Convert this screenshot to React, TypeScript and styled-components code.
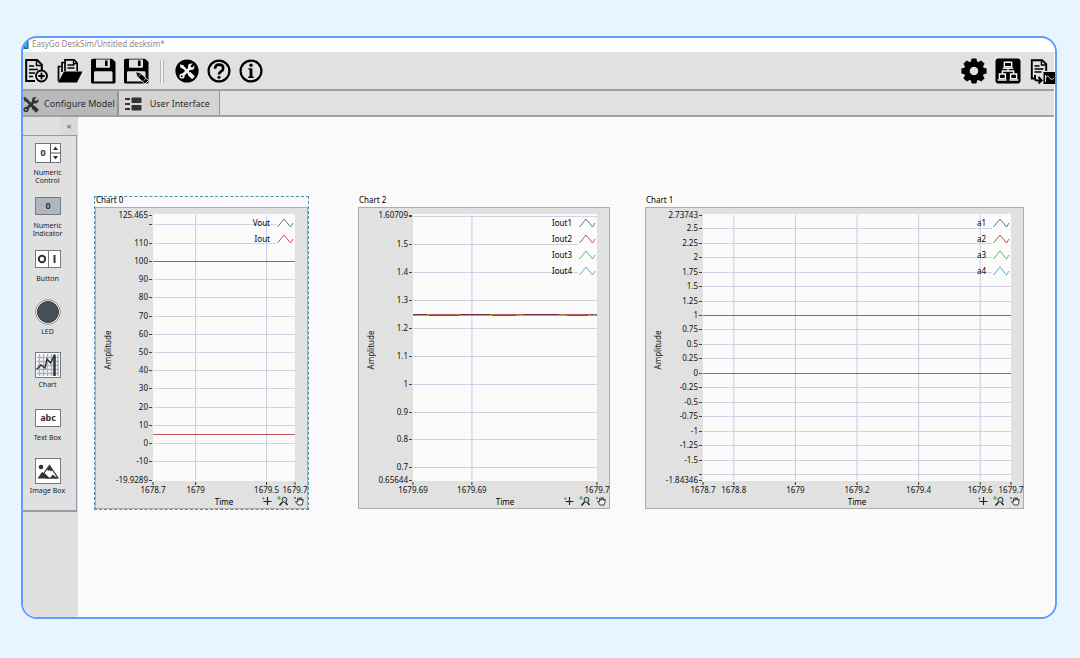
import React from "react";
import styled, { createGlobalStyle } from "styled-components";

const GlobalStyle = createGlobalStyle`
  *, *::before, *::after { box-sizing: border-box; }
  body {
    margin: 0;
    background: #e8f5ff;
    font-family: "Noto Sans", "Open Sans", sans-serif;
    color: #222;
  }
  button {
    font: inherit;
    color: inherit;
    border: 0;
    padding: 0;
    margin: 0;
    background: none;
    cursor: pointer;
  }
  svg { display: block; }
`;

const Page = styled.div`
  min-height: 100vh;
  padding: 36px 23px 39px 21px;
  display: flex;
`;

const AppWindow = styled.div`
  flex: 1;
  min-width: 0;
  display: flex;
  flex-direction: column;
  padding-right: 1px;
  overflow: hidden;
  background: #fff;
  border: 2px solid #5f9dff;
  border-radius: 16px;
`;

const TitleBar = styled.header`
  display: flex;
  align-items: center;
  gap: 3px;
  height: 14px;
  padding-bottom: 2px;
  font-size: 8px;
  line-height: 12px;
  color: #8a8a8a;
`;

const Toolbar = styled.div`
  display: flex;
  align-items: center;
  height: 39px;
  padding: 1px 0 0 1px;
  background: #e1e1e1;
  border-bottom: 2px solid #a0a0a0;
`;

const ToolGroup = styled.div<{ $gap: number; $end?: boolean }>`
  display: flex;
  gap: ${(p) => p.$gap}px;
  margin-left: ${(p) => (p.$end ? "auto" : "0")};
  margin-right: ${(p) => (p.$end ? "-1px" : "0")};
`;

const ToolButton = styled.button`
  width: 26px;
  height: 26px;
  color: #000;
`;

const Separator = styled.div`
  width: 4px;
  height: 23px;
  margin: 0 10px 0 11px;
  border: solid #b4b4b4;
  border-width: 0 1px;
  background: #f2f2f2;
`;

const TabBar = styled.div`
  display: flex;
  height: 26px;
  background: #e1e1e1;
  border-bottom: 2px solid #a0a0a0;
`;

const Tab = styled.button<{ $active?: boolean }>`
  display: flex;
  align-items: center;
  gap: ${(p) => (p.$active ? 4 : 8)}px;
  padding: 2px ${(p) => (p.$active ? 2 : 9)}px 0 ${(p) => (p.$active ? 0 : 5)}px;
  font-size: 9px;
  line-height: 12px;
  color: #2c2c2c;
  white-space: nowrap;
  background: ${(p) => (p.$active ? "#b9b9b9" : "#d4d4d4")};
  border-right: ${(p) => (p.$active ? 2 : 1)}px solid #969696;
`;

const Body = styled.div`
  flex: 1;
  display: flex;
  background: #fafafa;
`;

const Sidebar = styled.aside`
  flex: none;
  width: 55px;
  background: #e0e0e0;
`;

const Collapse = styled.div`
  display: flex;
  justify-content: flex-end;
  height: 18px;
`;

const CollapseButton = styled.button`
  width: 18px;
  font-size: 9px;
  line-height: 16px;
  color: #555;
  background: #dadada;
`;

const Palette = styled.div`
  width: 54px;
  padding: 3px 4px 0 0;
  border: solid #9a9aa6;
  border-width: 1px 1px 2px 0;
`;

const PaletteItem = styled.button`
  display: flex;
  flex-direction: column;
  align-items: center;
  gap: 2px;
  width: 100%;
  height: 53px;
  font-size: 7px;
  line-height: 8px;
  color: #222;
  text-align: center;
`;

const PaletteIcon = styled.span`
  display: flex;
  align-items: center;
  height: 28px;
`;

const PaletteLabel = styled.span`
  width: 44px;
`;

const Canvas = styled.main`
  flex: 1;
  min-width: 0;
  display: grid;
  grid-template-columns: 215fr 48fr 254fr 33fr 381fr;
  align-content: start;
  padding: 79px 29px 40px 16px;
`;

const Frame = styled.section<{ $column: number; $selected?: boolean }>`
  grid-column: ${(p) => p.$column};
  min-width: 0;
  border: 1px dashed ${(p) => (p.$selected ? "#4a90a6" : "transparent")};
`;

const ChartTitle = styled.h2`
  margin: 0;
  padding-left: 1px;
  height: 10px;
  font-size: 8px;
  line-height: 6px;
  font-weight: 400;
  color: #000;
`;

const Panel = styled.div<{ $axis: number }>`
  display: grid;
  grid-template-columns: ${(p) => p.$axis}px minmax(0, 1fr) 12px;
  grid-template-rows: 267px 14px 13px;
  padding-top: 6px;
  background: #e1e1e1;
  border: 1px solid #acacac;
`;

const YAxis = styled.svg`
  overflow: visible;
`;

const AxisText = styled.text`
  font-size: 8px;
  fill: #111;
`;

const PlotArea = styled.div`
  position: relative;
  background: #fbfbfb;
`;

const XAxis = styled.svg`
  grid-column: 2;
  overflow: visible;
`;

const Legend = styled.ul`
  position: absolute;
  top: 1px;
  right: 0;
  margin: 0;
  padding: 0;
  list-style: none;
  font-size: 8px;
  color: #000;
`;

const LegendItem = styled.li`
  display: flex;
  align-items: center;
  justify-content: flex-end;
  gap: 6px;
  height: 16px;
  line-height: 16px;
`;

const LegendSwatch = styled.svg`
  background: #fbfbfb;
`;

const TimeLabel = styled.div`
  grid-column: 2;
  grid-row: 3;
  justify-self: center;
  font-size: 8px;
  line-height: 14px;
  color: #000;
`;

const ChartTools = styled.div`
  grid-column: 2 / -1;
  grid-row: 3;
  justify-self: end;
  display: flex;
  gap: 4px;
  padding: 1px 2px 0 0;
`;

const ChartTool = styled.button`
  width: 12px;
  height: 10px;
`;

/* ---------- toolbar icons ---------- */

const Icon = ({ children }: { children: React.ReactNode }) => (
  <svg width="26" height="26" viewBox="0 0 26 26" fill="none" stroke="currentColor" strokeWidth="2" aria-hidden="true">
    {children}
  </svg>
);

const NewFileIcon = () => (
  <Icon>
    <path d="M11 23H2.2V2h11l4.600 4.600V12" />
    <path d="M12.500 2v5.500h5.500" strokeWidth="1.500" />
    <path d="M5 8h5M5 11.500h9M5 15h6M5 18.500h4" strokeWidth="1.600" />
    <circle cx="17.500" cy="18" r="5.500" strokeWidth="1.800" />
    <path d="M17.500 14.800v6.400M14.300 18h6.400" strokeWidth="1.800" />
  </Icon>
);

const OpenIcon = () => (
  <Icon>
    <path d="M1.500 23V8.500H4M5 14V4.500h2.500M8 13V1.800h9l3.200 3.200v8" strokeWidth="1.700" />
    <path d="M16.500 2v3.500H20M10.500 7h7M10.500 10h7" strokeWidth="1.400" />
    <path d="M7 13.500h18.500L20 24.500H1z" fill="currentColor" stroke="none" />
  </Icon>
);

const Disk = () => (
  <>
    <path d="M3 .800h19L25.500 4v20q0 1.500-1.500 1.500H2.500Q1 25.500 1 24V2.500Q1 .800 3 .800z" fill="currentColor" stroke="none" />
    <path d="M6 1.500h14V9q0 .800-.800.800H6.800Q6 9.800 6 9z" fill="#e1e1e1" stroke="none" />
    <path d="M16.300 2.500v5.500" strokeWidth="2.600" />
    <path d="M4 14.500q0-1.200 1.200-1.200h16q1.300 0 1.300 1.200v9H4z" fill="#e1e1e1" stroke="none" />
  </>
);

const SaveIcon = () => (
  <Icon>
    <Disk />
  </Icon>
);

const SaveAsIcon = () => (
  <Icon>
    <Disk />
    <path d="M12.500 13.500l5 1.500 8 7.500-3.500 3.500-8-7.500z" fill="currentColor" stroke="#e1e1e1" strokeWidth="1" />
    <path d="M15.500 18.500l2.500-2.800M20.500 22.800l2.500-2.600" stroke="#e1e1e1" strokeWidth=".800" />
  </Icon>
);

const CrossedTools = ({ color, hole }: { color: string; hole: string }) => (
  <>
    <path d="M8.200 8.200l9 9.400" stroke={color} strokeWidth="2.400" />
    <path d="M16 10L8 18" stroke={color} strokeWidth="3" />
    <circle cx="17.200" cy="8.800" r="3.200" fill={color} stroke="none" />
    <circle cx="8" cy="18" r="2.600" fill={color} stroke="none" />
    <path d="M17.200 8.800L21 5" stroke={hole} strokeWidth="2.400" />
    <circle cx="7.800" cy="18.200" r=".900" fill={hole} stroke="none" />
    <path d="M5.800 6.200l3.500 1 1 2.500-1.300 1-2.500-1z" fill={color} stroke="none" />
    <path d="M15 15.500l4.500 4.300" stroke={color} strokeWidth="4" />
  </>
);

const ToolsIcon = () => (
  <Icon>
    <circle cx="13" cy="13" r="11.600" fill="currentColor" stroke="none" />
    <CrossedTools color="#f1f1f1" hole="#000" />
  </Icon>
);

const HelpIcon = () => (
  <Icon>
    <circle cx="13" cy="13" r="10.400" strokeWidth="2.200" />
    <path d="M9 10.800q0-4.200 4.100-4.200t4.100 3.600q0 1.900-2.100 3.200T13 16.600" strokeWidth="2.600" />
    <circle cx="13" cy="19.300" r="1.600" fill="currentColor" stroke="none" />
  </Icon>
);

const InfoIcon = () => (
  <Icon>
    <circle cx="13" cy="13" r="10.400" strokeWidth="2.200" />
    <circle cx="13" cy="7.200" r="1.700" fill="currentColor" stroke="none" />
    <path d="M13 10.500v8.500" strokeWidth="2.800" />
    <path d="M10.500 11h2.500M10.300 19.300h5.400" strokeWidth="1.600" />
  </Icon>
);

const GearIcon = () => (
  <Icon>
    <circle cx="13" cy="13" r="7.200" strokeWidth="5.800" />
    {[0, 45, 90, 135, 180, 225, 270, 315].map((a) => (
      <path key={a} d="M9.600 4.500L10.600.400h4.800l1 4.100z" fill="currentColor" stroke="none" transform={`rotate(${a} 13 13)`} />
    ))}
  </Icon>
);

const NetworkIcon = () => (
  <Icon>
    <rect x=".500" y=".500" width="25" height="25" rx="3" fill="currentColor" stroke="none" />
    <g stroke="#f4f4f4" strokeWidth="1.400">
      <path d="M9.300 4.200h7.400v4.600H9.300zM4.400 16h6v4.600h-6zM15.600 16h6v4.600h-6z" />
      <path d="M7.800 10.200h10.400M13 10.200v2.800M7.400 16v-3h11.200v3M2.600 22h9M14.400 22h9" />
    </g>
  </Icon>
);

const ExportIcon = () => (
  <Icon>
    <path d="M5 20.500H2.800V2.200h10.400l4 4V13" strokeWidth="1.900" />
    <path d="M12.500 2v5h5M5.500 8h5M5.500 11h9M5.500 14h7" strokeWidth="1.500" />
    <path d="M6 17v3.500q0 2 2 2h4M9.500 19l3.200 3.500L9.500 25.500" strokeWidth="1.900" />
    <rect x="14.500" y="14" width="13" height="12" fill="currentColor" stroke="none" />
    <path d="M16.500 24v-7M16.500 20.500q1.700-4.500 3.800-1t4.700.5" stroke="#ddd" strokeWidth="1" />
  </Icon>
);

const TabToolsIcon = () => (
  <svg width="17" height="17" viewBox="5 4.500 17 17" fill="none" stroke="#333" aria-hidden="true">
    <path d="M6 6l12.500 13" stroke="#333" strokeWidth="2" />
    <CrossedTools color="#333" hole="#b9b9b9" />
  </svg>
);

const TabLayoutIcon = () => (
  <svg width="18" height="14" viewBox="0 0 18 14" fill="#333" aria-hidden="true">
    <path d="M1 1h5v2H1zM1 6h5v2H1zM1 11h5v2H1z" />
    <rect x="7.500" y=".500" width="10" height="5.500" rx="1" />
    <rect x="7.500" y="8" width="10" height="5.500" rx="1" />
  </svg>
);

const LogoMark = () => (
  <svg width="6" height="12" viewBox="0 0 6 12" aria-hidden="true">
    <path d="M0 1h5.500v10H0z" fill="#1c6fa8" />
    <path d="M0 8l4-6v8z" fill="#3fb0df" />
  </svg>
);

/* ---------- palette icons ---------- */

const GlyphText = styled.text<{ $size: number }>`
  font-size: ${(p) => p.$size}px;
  font-weight: 700;
  fill: #333;
  text-anchor: middle;
`;

const box = { fill: "#fff", stroke: "#77777f", strokeWidth: 1 };

const NumericControlIcon = () => (
  <svg width="26" height="20" viewBox="0 0 26 20">
    <rect x=".5" y=".5" width="25" height="19" {...box} />
    <path d="M15.500 0v20M15.500 10H26" stroke="#555" />
    <path d="M18 7l2.500-3.500L23 7zM18 13l2.500 3.500L23 13z" fill="#333" />
    <GlyphText $size={9} x="8" y="13">0</GlyphText>
  </svg>
);

const NumericIndicatorIcon = () => (
  <svg width="26" height="18" viewBox="0 0 26 18">
    <rect x=".5" y=".5" width="25" height="17" fill="#aeb6c0" stroke="#77777f" />
    <GlyphText $size={9} x="13" y="12">0</GlyphText>
  </svg>
);

const ButtonIcon = () => (
  <svg width="26" height="18" viewBox="0 0 26 18">
    <rect x=".5" y=".5" width="25" height="17" {...box} />
    <path d="M13.500 0v18" stroke="#77777f" />
    <circle cx="7" cy="9" r="3.200" fill="none" stroke="#333" strokeWidth="2" />
    <path d="M19.500 5v8" stroke="#333" strokeWidth="2" />
  </svg>
);

const LedIcon = () => (
  <svg width="26" height="26" viewBox="0 0 26 26">
    <circle cx="13" cy="13" r="12.300" fill="#f6f6f6" stroke="#8a8a90" />
    <circle cx="13" cy="13" r="10.500" fill="#4a5057" stroke="#33383d" />
  </svg>
);

const ChartIcon = () => (
  <svg width="26" height="26" viewBox="0 0 26 26">
    <rect x=".5" y=".5" width="25" height="25" {...box} />
    <path d="M2 5.500h22M2 9.500h22M2 13.500h22M2 17.500h22M2 21.500h22M4.500 2v22M8.500 2v22M12.500 2v22M16.500 2v22M23 2v22" stroke="#a9b3c0" strokeWidth="1.500" />
    <path d="M1.500 17.500L6 13l4 3 2-9 3.500 4L19 4" fill="none" stroke="#333" strokeWidth="1.500" />
    <path d="M19.500 2.500V24" stroke="#333" strokeWidth="2.500" />
  </svg>
);

const TextBoxIcon = () => (
  <svg width="26" height="18" viewBox="0 0 26 18">
    <rect x=".5" y=".5" width="25" height="17" {...box} />
    <GlyphText $size={9} x="13" y="12">abc</GlyphText>
  </svg>
);

const ImageBoxIcon = () => (
  <svg width="26" height="26" viewBox="0 0 26 26">
    <rect x=".5" y=".5" width="25" height="25" {...box} />
    <circle cx="6" cy="9" r="2.300" fill="#333" />
    <path d="M9 15l5.500-7.500L23 20H10" fill="none" stroke="#333" strokeWidth="1.200" />
    <path d="M2.500 20.500L7 14l3 1.500 5 5zM12 11l2.500-3.500 3 4.300-1.500 1.700-1.500-1.500-1.500 1z" fill="#333" />
    <path d="M15 20.500l2.500-4 2 1.500 3.500 2.500z" fill="#333" />
  </svg>
);

/* ---------- charts ---------- */

interface Tick {
  at: number;
  label?: string;
}

interface Series {
  name: string;
  color: string;
  value?: number;
}

interface ChartProps {
  title: string;
  column: number;
  axis: number;
  selected?: boolean;
  min: number;
  max: number;
  yTicks: Tick[];
  xTicks: Tick[];
  series: Series[];
  children?: React.ReactNode;
}

const SPAN = 265;

const Chart = ({ title, column, axis, selected, min, max, yTicks, xTicks, series, children }: ChartProps) => {
  const toY = (v: number) => Math.floor(1 + ((max - v) / (max - min)) * SPAN) + 0.5;
  const inner = xTicks.filter((t) => t.at > 0 && t.at < 100);
  const ends: Tick[] = [
    { at: max, label: String(max) },
    { at: min, label: String(min) },
  ];
  return (
    <Frame $column={column} $selected={selected} aria-label={title}>
      <ChartTitle>{title}</ChartTitle>
      <Panel $axis={axis}>
        <YAxis width={axis} height="267">
          {[...ends, ...yTicks].map((t) => (
            <React.Fragment key={t.at}>
              <line x1={axis - 4} x2={axis - 1} y1={toY(t.at)} y2={toY(t.at)} stroke="#444" />
              {t.label && (
                <AxisText x={axis - 5} y={Math.floor(toY(t.at)) + 3} textAnchor="end">
                  {t.label}
                </AxisText>
              )}
            </React.Fragment>
          ))}
          <AxisText transform="translate(15 136) rotate(-90)" textAnchor="middle">
            Amplitude
          </AxisText>
        </YAxis>
        <PlotArea>
          <svg width="100%" height="267">
            {yTicks.map((t) => (
              <line key={t.at} x1="0" x2="100%" y1={toY(t.at)} y2={toY(t.at)} stroke="#d2d2e4" />
            ))}
            {inner.map((t) => (
              <line key={t.at} x1={`${t.at}%`} x2={`${t.at}%`} y1="1" y2="266" stroke="#cacae0" />
            ))}
            {series
              .filter((s) => s.value !== undefined)
              .map((s) => (
                <line key={s.name} x1="0" x2="100%" y1={toY(s.value!)} y2={toY(s.value!)} stroke={s.color} />
              ))}
            {children}
          </svg>
          <Legend>
            {series.map((s) => (
              <LegendItem key={s.name}>
                {s.name}
                <LegendSwatch width="19" height="12" viewBox="0 0 19 12">
                  <path d="M1.500 10L8 2l6.500 8L17 6" fill="none" stroke={s.color} />
                </LegendSwatch>
              </LegendItem>
            ))}
          </Legend>
        </PlotArea>
        <XAxis width="100%" height="14">
          {xTicks.map((t) => (
            <React.Fragment key={t.at}>
              <line x1={`${t.at}%`} x2={`${t.at}%`} y1="1" y2="4" stroke="#333" />
              <AxisText x={`${t.at}%`} y="12" textAnchor="middle">
                {t.label}
              </AxisText>
            </React.Fragment>
          ))}
        </XAxis>
        <TimeLabel>Time</TimeLabel>
        <ChartTools>
          <ChartTool aria-label="Cursor">
            <svg width="12" height="10" viewBox="0 0 12 10">
              <path d="M6.500 1v8M2.500 5.500h8" stroke="#222" strokeWidth="1.200" />
              <circle cx="2.500" cy="2.500" r="1" fill="#4b6b4b" />
            </svg>
          </ChartTool>
          <ChartTool aria-label="Zoom">
            <svg width="12" height="10" viewBox="0 0 12 10">
              <circle cx="2" cy="2" r="1.700" fill="#5fb84a" />
              <circle cx="7.500" cy="3.800" r="2.500" fill="#c9c9e4" stroke="#333" />
              <path d="M5.500 6L2.500 9.500M8.500 6.500l2 2.500" stroke="#222" strokeWidth="1.500" />
            </svg>
          </ChartTool>
          <ChartTool aria-label="Pan">
            <svg width="12" height="10" viewBox="0 0 12 10">
              <circle cx="2" cy="2" r="1" fill="#4b6b4b" />
              <path d="M5 9L2.500 5.500 4.500 6V2.500l1.500 2V1.500l1.500 2.500.5-2.500 1 3 1-1.500V6L9 9z" fill="#f2f2f2" stroke="#333" strokeWidth=".9" />
            </svg>
          </ChartTool>
        </ChartTools>
      </Panel>
    </Frame>
  );
};

const steps = (values: number[], hidden: number[] = []): Tick[] =>
  values.map((v) => ({ at: v, label: hidden.includes(v) ? undefined : String(v) }));

const BLUE = "#4a8292";
const RED = "#c25555";
const GREEN = "#62bd62";
const CYAN = "#5fb5c0";

const Ripple = () => (
  <svg width="100%" height="267" viewBox="0 0 184 267" preserveAspectRatio="none" fill="none">
    <path d="M0 101.500H184" stroke="#8fa3b4" />
    <path d="M0 100.500H184" stroke="#7a3038" />
    <path d="M15 100.500H46M80 100.500H108M148 100.500H178" stroke="#b65c5c" />
    <path d="M16 101.500H46M79 101.500H103M154 101.500H175" stroke="#4f5f70" />
    <path d="M14 100.500h5M43 100.500h4M77 100.500h5M107 100.500h3M146 100.500h4M180 100.500h3" stroke="#8a8a20" />
  </svg>
);

const palette: { label: string; icon: React.ReactNode }[] = [
  { label: "Numeric Control", icon: <NumericControlIcon /> },
  { label: "Numeric Indicator", icon: <NumericIndicatorIcon /> },
  { label: "Button", icon: <ButtonIcon /> },
  { label: "LED", icon: <LedIcon /> },
  { label: "Chart", icon: <ChartIcon /> },
  { label: "Text Box", icon: <TextBoxIcon /> },
  { label: "Image Box", icon: <ImageBoxIcon /> },
];

export default function App() {
  return (
    <>
      <GlobalStyle />
      <Page>
        <AppWindow>
          <TitleBar>
            <LogoMark />
            EasyGo DeskSim/Untitled.desksim*
          </TitleBar>
          <Toolbar>
            <ToolGroup $gap={7}>
              <ToolButton aria-label="New file"><NewFileIcon /></ToolButton>
              <ToolButton aria-label="Open"><OpenIcon /></ToolButton>
              <ToolButton aria-label="Save"><SaveIcon /></ToolButton>
              <ToolButton aria-label="Save as"><SaveAsIcon /></ToolButton>
            </ToolGroup>
            <Separator />
            <ToolGroup $gap={6}>
              <ToolButton aria-label="Tools"><ToolsIcon /></ToolButton>
              <ToolButton aria-label="Help"><HelpIcon /></ToolButton>
              <ToolButton aria-label="About"><InfoIcon /></ToolButton>
            </ToolGroup>
            <ToolGroup $gap={8} $end>
              <ToolButton aria-label="Settings"><GearIcon /></ToolButton>
              <ToolButton aria-label="Network"><NetworkIcon /></ToolButton>
              <ToolButton aria-label="Export"><ExportIcon /></ToolButton>
            </ToolGroup>
          </Toolbar>
          <TabBar>
            <Tab $active>
              <TabToolsIcon />
              Configure Model
            </Tab>
            <Tab>
              <TabLayoutIcon />
              User Interface
            </Tab>
          </TabBar>
          <Body>
            <Sidebar>
              <Collapse>
                <CollapseButton aria-label="Collapse">«</CollapseButton>
              </Collapse>
              <Palette>
                {palette.map((p) => (
                  <PaletteItem key={p.label}>
                    <PaletteIcon>{p.icon}</PaletteIcon>
                    <PaletteLabel>{p.label}</PaletteLabel>
                  </PaletteItem>
                ))}
              </Palette>
            </Sidebar>
            <Canvas>
              <Chart
                title="Chart 0"
                column={1}
                axis={57}
                selected
                min={-19.9289}
                max={125.465}
                yTicks={steps([120, 110, 100, 90, 80, 70, 60, 50, 40, 30, 20, 10, 0, -10], [120])}
                xTicks={[
                  { at: 0, label: "1678.7" },
                  { at: 30, label: "1679" },
                  { at: 80, label: "1679.5" },
                  { at: 100, label: "1679.7" },
                ]}
                series={[
                  { name: "Vout", color: BLUE, value: 100 },
                  { name: "Iout", color: RED, value: 5 },
                ]}
              />
              <Chart
                title="Chart 2"
                column={3}
                axis={54}
                min={0.65644}
                max={1.60709}
                yTicks={steps([1.6, 1.5, 1.4, 1.3, 1.2, 1.1, 1, 0.9, 0.8, 0.7], [1.6])}
                xTicks={[
                  { at: 0, label: "1679.69" },
                  { at: 32, label: "1679.69" },
                  { at: 100, label: "1679.7" },
                ]}
                series={[
                  { name: "Iout1", color: BLUE },
                  { name: "Iout2", color: RED },
                  { name: "Iout3", color: GREEN },
                  { name: "Iout4", color: CYAN },
                ]}
              >
                <Ripple />
              </Chart>
              <Chart
                title="Chart 1"
                column={5}
                axis={57}
                min={-1.84346}
                max={2.73743}
                yTicks={steps(
                  [2.5, 2.25, 2, 1.75, 1.5, 1.25, 1, 0.75, 0.5, 0.25, 0, -0.25, -0.5, -0.75, -1, -1.25, -1.5, -1.75],
                  [-1.75],
                )}
                xTicks={[
                  { at: 0, label: "1678.7" },
                  { at: 10, label: "1678.8" },
                  { at: 30, label: "1679" },
                  { at: 50, label: "1679.2" },
                  { at: 70, label: "1679.4" },
                  { at: 90, label: "1679.6" },
                  { at: 100, label: "1679.7" },
                ]}
                series={[
                  { name: "a1", color: BLUE, value: 1 },
                  { name: "a2", color: RED, value: 0 },
                  { name: "a3", color: GREEN },
                  { name: "a4", color: CYAN },
                ]}
              />
            </Canvas>
          </Body>
        </AppWindow>
      </Page>
    </>
  );
}
